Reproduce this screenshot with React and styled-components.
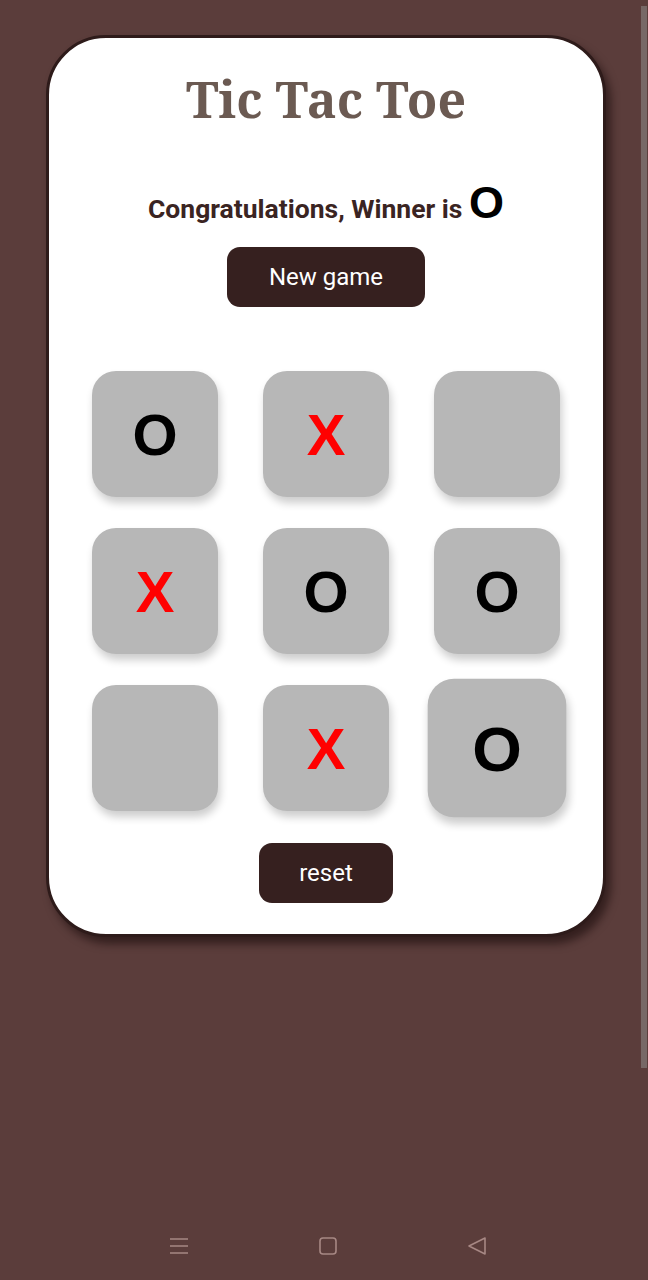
import React, { useState } from 'react';
import styled, { createGlobalStyle } from 'styled-components';

const GlobalStyle = createGlobalStyle`
  html, body {
    margin: 0;
    padding: 0;
    background: #5b3d3b;
  }
  * { box-sizing: border-box; }
`;

const Screen = styled.div`
  position: relative;
  min-height: 1280px;
  display: flex;
  flex-direction: column;
  background: #5b3d3b;
  overflow: hidden;
`;

const Card = styled.div`
  margin: 35px 0 0 46px;
  width: 560px;
  height: 902px;
  background: #fff;
  border: 3px solid #2e1b1a;
  border-radius: 60px;
  box-shadow: 5px 7px 9px rgba(20, 8, 8, 0.55);
  display: flex;
  flex-direction: column;
  align-items: center;
  padding: 0 43px;
`;

const Title = styled.h1`
  margin: 29px 0 0;
  font-family: 'Noto Serif', 'Liberation Serif', 'DejaVu Serif', serif;
  font-weight: 700;
  font-size: 50px;
  line-height: 64px;
  color: #6b5a52;
`;

const Status = styled.p`
  margin: 52px 0 0;
  font-family: Roboto, 'Liberation Sans', sans-serif;
  font-weight: 700;
  font-size: 26.5px;
  line-height: 40px;
  color: #3a2422;
`;

const Winner = styled.span`
  font-family: 'Liberation Sans', Arial, sans-serif;
  font-weight: 700;
  font-size: 45px;
  color: #000;
`;

const Button = styled.button`
  margin-top: ${(p) => p.$top}px;
  width: ${(p) => p.$width}px;
  height: 60px;
  border: none;
  border-radius: 13px;
  background: #36201f;
  color: #fff;
  font-family: Roboto, 'Liberation Sans', sans-serif;
  font-size: 24px;
  cursor: pointer;
`;

const Board = styled.div`
  margin-top: 64px;
  display: grid;
  grid-template-columns: repeat(3, 126px);
  grid-auto-rows: 126px;
  column-gap: 45px;
  row-gap: 31px;
`;

const Cell = styled.div`
  display: flex;
  align-items: center;
  justify-content: center;
  border-radius: 24px;
  background: #b7b7b7;
  box-shadow: 2px 6px 8px rgba(0, 0, 0, 0.2);
  font-family: 'Liberation Sans', Arial, sans-serif;
  font-weight: 700;
  font-size: 58px;
  color: ${(p) => (p.$mark === 'X' ? '#ff0000' : '#000')};
  transform: ${(p) => (p.$hover ? 'scale(1.1)' : 'none')};
  cursor: pointer;
`;

const Spacer = styled.div`
  flex: 1;
`;

const NavBar = styled.div`
  height: 72px;
  display: flex;
  align-items: center;
  justify-content: center;
  gap: 129px;
  padding: 4px 0 0 7px;
`;

const NavIcon = styled.svg`
  width: 20px;
  height: 20px;
  stroke: #a78884;
  fill: none;
  stroke-width: 1.6;
`;

const ScrollThumb = styled.div`
  position: absolute;
  top: 6px;
  right: 1px;
  width: 6px;
  height: 1062px;
  background: #776866;
`;

const cells = ['O', 'X', '', 'X', 'O', 'O', '', 'X', 'O'];

export default function App() {
  const [board] = useState(cells);
  return (
    <Screen>
      <GlobalStyle />
      <Card>
        <Title>Tic Tac Toe</Title>
        <Status>
          Congratulations, Winner is <Winner>O</Winner>
        </Status>
        <Button $top={18} $width={198}>New game</Button>
        <Board>
          {board.map((m, i) => (
            <Cell key={i} $mark={m} $hover={i === 8}>
              {m}
            </Cell>
          ))}
        </Board>
        <Button $top={32} $width={134}>reset</Button>
      </Card>
      <Spacer />
      <NavBar>
        <NavIcon viewBox="0 0 20 20">
          <path d="M1 3h18M1 10h18M1 17h18" />
        </NavIcon>
        <NavIcon viewBox="0 0 20 20">
          <rect x="2" y="2" width="16" height="16" rx="3" />
        </NavIcon>
        <NavIcon viewBox="0 0 20 20">
          <path d="M18 2L2 10l16 8z" strokeLinejoin="round" />
        </NavIcon>
      </NavBar>
      <ScrollThumb />
    </Screen>
  );
}
